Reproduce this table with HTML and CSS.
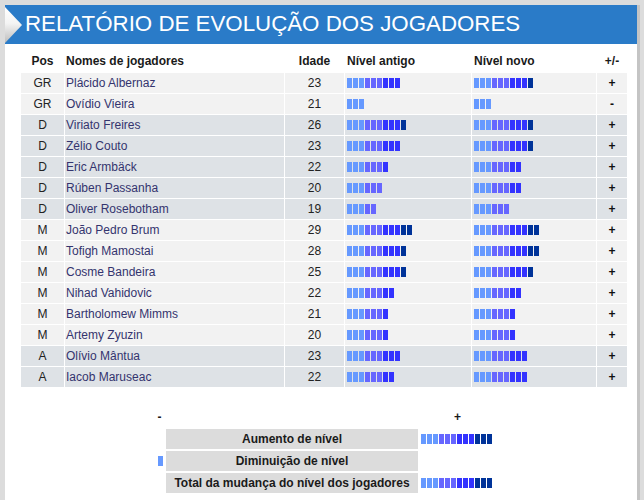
FILE: index.html
```html
<!DOCTYPE html>
<html lang="pt">
<head>
<meta charset="utf-8">
<title>Relatório de evolução dos jogadores</title>
<link rel="stylesheet" href="styles.css">
</head>
<body>
<div class="page">
  <div class="panel">
    <div class="titlebar">
      <div class="arrow"></div>
      <h1 class="title">RELATÓRIO DE EVOLUÇÃO DOS JOGADORES</h1>
    </div>

    <table class="players">
      <colgroup>
        <col class="c-pos"><col class="c-name"><col class="c-age"><col class="c-old"><col class="c-new"><col class="c-diff">
      </colgroup>
      <thead>
        <tr><th class="pos">Pos</th><th class="name">Nomes de jogadores</th><th class="age">Idade</th><th class="lvl">Nível antigo</th><th class="lvl">Nível novo</th><th class="diff">+/-</th></tr>
      </thead>
      <tbody>
        <tr class="lt"><td class="pos">GR</td><td class="name">Plácido Albernaz</td><td class="age">23</td>
          <td class="lvl"><span class="bar"><i class="a"></i><i class="a"></i><i class="a"></i><i class="b"></i><i class="b"></i><i class="b"></i><i class="c"></i><i class="c"></i><i class="c"></i></span></td>
          <td class="lvl"><span class="bar"><i class="a"></i><i class="a"></i><i class="a"></i><i class="b"></i><i class="b"></i><i class="b"></i><i class="c"></i><i class="c"></i><i class="c"></i><i class="d"></i></span></td>
          <td class="diff">+</td></tr>
        <tr class="lt"><td class="pos">GR</td><td class="name">Ovídio Vieira</td><td class="age">21</td>
          <td class="lvl"><span class="bar"><i class="a"></i><i class="a"></i><i class="a"></i></span></td>
          <td class="lvl"><span class="bar"><i class="a"></i><i class="a"></i><i class="a"></i></span></td>
          <td class="diff">-</td></tr>
        <tr class="dk"><td class="pos">D</td><td class="name">Viriato Freires</td><td class="age">26</td>
          <td class="lvl"><span class="bar"><i class="a"></i><i class="a"></i><i class="a"></i><i class="b"></i><i class="b"></i><i class="b"></i><i class="c"></i><i class="c"></i><i class="c"></i><i class="d"></i></span></td>
          <td class="lvl"><span class="bar"><i class="a"></i><i class="a"></i><i class="a"></i><i class="b"></i><i class="b"></i><i class="b"></i><i class="c"></i><i class="c"></i><i class="c"></i><i class="d"></i></span></td>
          <td class="diff">+</td></tr>
        <tr class="dk"><td class="pos">D</td><td class="name">Zélio Couto</td><td class="age">23</td>
          <td class="lvl"><span class="bar"><i class="a"></i><i class="a"></i><i class="a"></i><i class="b"></i><i class="b"></i><i class="b"></i><i class="c"></i><i class="c"></i><i class="c"></i></span></td>
          <td class="lvl"><span class="bar"><i class="a"></i><i class="a"></i><i class="a"></i><i class="b"></i><i class="b"></i><i class="b"></i><i class="c"></i><i class="c"></i><i class="c"></i><i class="d"></i></span></td>
          <td class="diff">+</td></tr>
        <tr class="dk"><td class="pos">D</td><td class="name">Eric Armbäck</td><td class="age">22</td>
          <td class="lvl"><span class="bar"><i class="a"></i><i class="a"></i><i class="a"></i><i class="b"></i><i class="b"></i><i class="b"></i><i class="c"></i></span></td>
          <td class="lvl"><span class="bar"><i class="a"></i><i class="a"></i><i class="a"></i><i class="b"></i><i class="b"></i><i class="b"></i><i class="c"></i><i class="c"></i></span></td>
          <td class="diff">+</td></tr>
        <tr class="dk"><td class="pos">D</td><td class="name">Rúben Passanha</td><td class="age">20</td>
          <td class="lvl"><span class="bar"><i class="a"></i><i class="a"></i><i class="a"></i><i class="b"></i><i class="b"></i><i class="b"></i></span></td>
          <td class="lvl"><span class="bar"><i class="a"></i><i class="a"></i><i class="a"></i><i class="b"></i><i class="b"></i><i class="b"></i><i class="c"></i><i class="c"></i></span></td>
          <td class="diff">+</td></tr>
        <tr class="dk"><td class="pos">D</td><td class="name">Oliver Rosebotham</td><td class="age">19</td>
          <td class="lvl"><span class="bar"><i class="a"></i><i class="a"></i><i class="a"></i><i class="b"></i><i class="b"></i></span></td>
          <td class="lvl"><span class="bar"><i class="a"></i><i class="a"></i><i class="a"></i><i class="b"></i><i class="b"></i><i class="b"></i></span></td>
          <td class="diff">+</td></tr>
        <tr class="lt"><td class="pos">M</td><td class="name">João Pedro Brum</td><td class="age">29</td>
          <td class="lvl"><span class="bar"><i class="a"></i><i class="a"></i><i class="a"></i><i class="b"></i><i class="b"></i><i class="b"></i><i class="c"></i><i class="c"></i><i class="c"></i><i class="d"></i><i class="d"></i></span></td>
          <td class="lvl"><span class="bar"><i class="a"></i><i class="a"></i><i class="a"></i><i class="b"></i><i class="b"></i><i class="b"></i><i class="c"></i><i class="c"></i><i class="c"></i><i class="d"></i><i class="d"></i></span></td>
          <td class="diff">+</td></tr>
        <tr class="lt"><td class="pos">M</td><td class="name">Tofigh Mamostai</td><td class="age">28</td>
          <td class="lvl"><span class="bar"><i class="a"></i><i class="a"></i><i class="a"></i><i class="b"></i><i class="b"></i><i class="b"></i><i class="c"></i><i class="c"></i><i class="c"></i><i class="d"></i></span></td>
          <td class="lvl"><span class="bar"><i class="a"></i><i class="a"></i><i class="a"></i><i class="b"></i><i class="b"></i><i class="b"></i><i class="c"></i><i class="c"></i><i class="c"></i><i class="d"></i><i class="d"></i></span></td>
          <td class="diff">+</td></tr>
        <tr class="lt"><td class="pos">M</td><td class="name">Cosme Bandeira</td><td class="age">25</td>
          <td class="lvl"><span class="bar"><i class="a"></i><i class="a"></i><i class="a"></i><i class="b"></i><i class="b"></i><i class="b"></i><i class="c"></i><i class="c"></i><i class="c"></i><i class="d"></i></span></td>
          <td class="lvl"><span class="bar"><i class="a"></i><i class="a"></i><i class="a"></i><i class="b"></i><i class="b"></i><i class="b"></i><i class="c"></i><i class="c"></i><i class="c"></i><i class="d"></i></span></td>
          <td class="diff">+</td></tr>
        <tr class="lt"><td class="pos">M</td><td class="name">Nihad Vahidovic</td><td class="age">22</td>
          <td class="lvl"><span class="bar"><i class="a"></i><i class="a"></i><i class="a"></i><i class="b"></i><i class="b"></i><i class="b"></i><i class="c"></i><i class="c"></i></span></td>
          <td class="lvl"><span class="bar"><i class="a"></i><i class="a"></i><i class="a"></i><i class="b"></i><i class="b"></i><i class="b"></i><i class="c"></i><i class="c"></i></span></td>
          <td class="diff">+</td></tr>
        <tr class="lt"><td class="pos">M</td><td class="name">Bartholomew Mimms</td><td class="age">21</td>
          <td class="lvl"><span class="bar"><i class="a"></i><i class="a"></i><i class="a"></i><i class="b"></i><i class="b"></i><i class="b"></i><i class="c"></i></span></td>
          <td class="lvl"><span class="bar"><i class="a"></i><i class="a"></i><i class="a"></i><i class="b"></i><i class="b"></i><i class="b"></i><i class="c"></i></span></td>
          <td class="diff">+</td></tr>
        <tr class="lt"><td class="pos">M</td><td class="name">Artemy Zyuzin</td><td class="age">20</td>
          <td class="lvl"><span class="bar"><i class="a"></i><i class="a"></i><i class="a"></i><i class="b"></i><i class="b"></i><i class="b"></i><i class="c"></i></span></td>
          <td class="lvl"><span class="bar"><i class="a"></i><i class="a"></i><i class="a"></i><i class="b"></i><i class="b"></i><i class="b"></i><i class="c"></i></span></td>
          <td class="diff">+</td></tr>
        <tr class="dk"><td class="pos">A</td><td class="name">Olívio Mântua</td><td class="age">23</td>
          <td class="lvl"><span class="bar"><i class="a"></i><i class="a"></i><i class="a"></i><i class="b"></i><i class="b"></i><i class="b"></i><i class="c"></i><i class="c"></i><i class="c"></i></span></td>
          <td class="lvl"><span class="bar"><i class="a"></i><i class="a"></i><i class="a"></i><i class="b"></i><i class="b"></i><i class="b"></i><i class="c"></i><i class="c"></i><i class="c"></i></span></td>
          <td class="diff">+</td></tr>
        <tr class="dk"><td class="pos">A</td><td class="name">Iacob Maruseac</td><td class="age">22</td>
          <td class="lvl"><span class="bar"><i class="a"></i><i class="a"></i><i class="a"></i><i class="b"></i><i class="b"></i><i class="b"></i><i class="c"></i><i class="c"></i></span></td>
          <td class="lvl"><span class="bar"><i class="a"></i><i class="a"></i><i class="a"></i><i class="b"></i><i class="b"></i><i class="b"></i><i class="c"></i><i class="c"></i><i class="c"></i></span></td>
          <td class="diff">+</td></tr>
      </tbody>
    </table>

    <table class="summary">
      <colgroup><col class="s-minus"><col class="s-label"><col class="s-plus"></colgroup>
      <tr class="s-head"><td class="s-m">-</td><td></td><td class="s-p">+</td></tr>
      <tr><td class="s-m"></td><td class="s-label-cell">Aumento de nível</td>
        <td class="s-p"><span class="bar"><i class="a"></i><i class="a"></i><i class="a"></i><i class="b"></i><i class="b"></i><i class="b"></i><i class="c"></i><i class="c"></i><i class="c"></i><i class="d"></i><i class="d"></i><i class="d"></i></span></td></tr>
      <tr><td class="s-m"><span class="bar rev"><i class="a"></i></span></td><td class="s-label-cell">Diminuição de nível</td><td class="s-p"></td></tr>
      <tr><td class="s-m"></td><td class="s-label-cell">Total da mudança do nível dos jogadores</td>
        <td class="s-p"><span class="bar"><i class="a"></i><i class="a"></i><i class="a"></i><i class="b"></i><i class="b"></i><i class="b"></i><i class="c"></i><i class="c"></i><i class="c"></i><i class="d"></i><i class="d"></i><i class="d"></i></span></td></tr>
    </table>
  </div>
</div>
</body>
</html>
```
FILE: styles.css
```css
html, body {
  margin: 0;
  padding: 0;
}
body {
  background: #dcdcdc;
  font-family: "Liberation Sans", Arial, sans-serif;
  font-size: 12px;
  color: #222;
}
.page {
  padding: 5px 0 0 5px;
}
.panel {
  width: 632px;
  min-height: 495px;
  background: #fff;
  box-shadow: 3px 0 0 #c4c4c4;
}
.titlebar {
  height: 39px;
  background: #2a7bc8;
  display: flex;
  align-items: flex-start;
}
.arrow {
  width: 17px;
  height: 36px;
  margin-top: 2px;
  flex: none;
  clip-path: polygon(0 0, 100% 50%, 0 100%);
  background: linear-gradient(to bottom, #ffffff 0%, #f4f4f4 45%, #bcbcbc 100%);
}
.title {
  margin: 0 0 0 3px;
  font-weight: normal;
  font-size: 22.3px;
  line-height: 38px;
  color: #fff;
  white-space: nowrap;
}

/* players table */
.players {
  margin: 6px 0 0 15px;
  width: 608px;
  table-layout: fixed;
  border-collapse: separate;
  border-spacing: 1px;
}
.c-pos { width: 43px; }
.c-name { width: 219px; }
.c-age { width: 59px; }
.c-old { width: 126px; }
.c-new { width: 124px; }
.c-diff { width: 30px; }
.players th, .players td {
  height: 20px;
  padding: 0;
  vertical-align: middle;
  white-space: nowrap;
}
.players th {
  padding-bottom: 1px;
  background: #fff;
  font-weight: bold;
  color: #1a1a1a;
}
.players .pos, .players .age, .players .diff { text-align: center; }
.players .name, .players .lvl { text-align: left; }
.players th.name, .players td.name { padding-left: 1px; }
.players .lvl { padding-left: 2px; }
.players td.name { color: #34346e; }
.players td.diff { font-weight: bold; color: #111; }
.lt td { background: #f2f2f2; }
.dk td { background: #dee2e6; }

/* level bar */
.bar {
  display: flex;
  gap: 1px;
  height: 10px;
}
.bar i {
  display: block;
  width: 5px;
  height: 10px;
}
.bar .a { background: #6699ff; }
.bar .b { background: #6666ff; }
.bar .c { background: #3333ff; }
.bar .d { background: #003399; }
.bar.rev { justify-content: flex-end; }

/* summary table */
.summary {
  margin: 17px 0 0 149px;
  width: 342px;
  table-layout: fixed;
  border-collapse: separate;
  border-spacing: 2px;
}
.s-minus { width: 8px; }
.s-label { width: 252px; }
.s-plus { width: 74px; }
.summary td {
  height: 20px;
  padding: 0;
  vertical-align: middle;
  white-space: nowrap;
  font-weight: bold;
  color: #1a1a1a;
}
.summary .s-head td { text-align: center; }
.summary .s-m { padding-right: 1px; }
.summary .s-p { padding-left: 1px; }
.summary .s-label-cell {
  background: #dcdcdc;
  text-align: center;
}
```
